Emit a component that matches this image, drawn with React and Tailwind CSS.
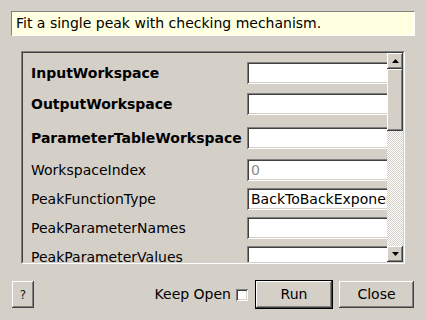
import React from "react";

const raised =
  "shadow-[inset_-1px_-1px_#404040,inset_1px_1px_#ffffff,inset_-2px_-2px_#808080,inset_2px_2px_#d4d0c8]";
const sunken =
  "shadow-[inset_1px_1px_#808080,inset_-1px_-1px_#ffffff,inset_2px_2px_#404040,inset_-2px_-2px_#d4d0c8]";

function Row({ label, bold, mt, value, gray }) {
  return (
    <div className={`flex items-center h-[22px] shrink-0 ${mt}`}>
      <div className={`w-[224px] shrink-0 pl-[8px] whitespace-nowrap ${bold ? "font-bold" : ""}`}>{label}</div>
      <div className={`w-[160px] h-[22px] shrink-0 bg-white ${sunken} flex items-center pl-[4px] whitespace-nowrap overflow-hidden ${gray ? "text-[#8a8a8a]" : ""}`}>
        {value}
      </div>
    </div>
  );
}

function Arrow({ down }) {
  return (
    <svg width="7" height="4" viewBox="0 0 7 4">
      {down ? <polygon points="0,0 7,0 3.5,4" fill="#000" /> : <polygon points="0,4 7,4 3.5,0" fill="#000" />}
    </svg>
  );
}

export default function App() {
  return (
    <div className="w-[426px] h-[320px] bg-[#d4d0c8] font-['DejaVu_Sans',sans-serif] text-[14px] text-black overflow-hidden flex flex-col">
      <div className="mt-[11px] ml-[11px] w-[404px] h-[25px] bg-[#ffffe1] border border-t-[#808080] border-l-[#808080] border-b-[#ffffff] border-r-[#ffffff] flex items-center pl-[4px] whitespace-nowrap">
        Fit a single peak with checking mechanism.
      </div>

      <div className="mt-[15px] ml-[21px] w-[384px] h-[213px] border border-t-[#808080] border-l-[#808080] border-b-[#ffffff] border-r-[#ffffff]">
        <div className="w-full h-full border border-t-[#404040] border-l-[#404040] border-b-[#d4d0c8] border-r-[#d4d0c8] flex">
          <div className="flex-1 min-w-0 overflow-hidden flex flex-col">
            <Row label="InputWorkspace" bold mt="mt-[9px]" />
            <Row label="OutputWorkspace" bold mt="mt-[9px]" />
            <Row label="ParameterTableWorkspace" bold mt="mt-[12px]" />
            <Row label="WorkspaceIndex" mt="mt-[10px]" value="0" gray />
            <Row label="PeakFunctionType" mt="mt-[7px]" value="BackToBackExponential" />
            <Row label="PeakParameterNames" mt="mt-[7px]" />
            <Row label="PeakParameterValues" mt="mt-[7px]" />
          </div>
          <div className="w-[16px] h-full flex flex-col shrink-0">
            <div className={`h-[16px] shrink-0 bg-[#d4d0c8] ${raised} flex items-center justify-center`}>
              <Arrow />
            </div>
            <div className={`h-[62px] shrink-0 bg-[#d4d0c8] ${raised}`} />
            <div className="flex-1 bg-[image:repeating-conic-gradient(#ffffff_0%_25%,#d4d0c8_0%_50%)] bg-[length:2px_2px]" />
            <div className={`h-[16px] shrink-0 bg-[#d4d0c8] ${raised} flex items-center justify-center`}>
              <Arrow down />
            </div>
          </div>
        </div>
      </div>

      <div className="mt-[16px] flex items-center h-[29px] pr-[12px]">
        <div className={`ml-[12px] w-[22px] h-[27px] ${raised} flex items-center justify-center text-[12px] text-[#202020]`}>
          ?
        </div>
        <div className="flex-1" />
        <div className="whitespace-nowrap">Keep Open</div>
        <div className={`ml-[5px] w-[12px] h-[12px] bg-white ${sunken}`} />
        <div className="ml-[7px] w-[78px] h-[29px] border border-black">
          <div className={`w-full h-full ${raised} flex items-center justify-center`}>Run</div>
        </div>
        <div className={`ml-[6px] w-[75px] h-[27px] ${raised} flex items-center justify-center`}>Close</div>
      </div>
    </div>
  );
}
